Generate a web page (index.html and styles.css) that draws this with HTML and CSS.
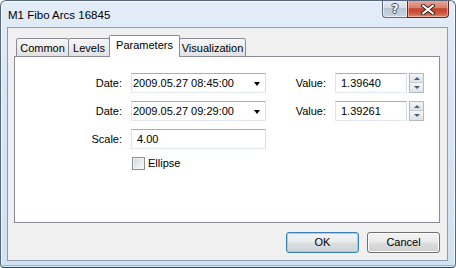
FILE: index.html
```html
<!DOCTYPE html>
<html>
<head>
<meta charset="utf-8">
<link rel="stylesheet" href="styles.css">
</head>
<body>
<div class="window">
  <div class="titlebar">
    <span class="title">M1 Fibo Arcs 16845</span>
    <div class="caption-btns">
      <div class="cap-help"><span class="help-glyph">?</span></div>
      <div class="cap-close">
        <svg width="14" height="11" viewBox="0 0 14 11"><path d="M2 1.5 L12 9.5 M12 1.5 L2 9.5" stroke="#3a2a28" stroke-width="4" stroke-linecap="round"/><path d="M2 1.5 L12 9.5 M12 1.5 L2 9.5" stroke="#ffffff" stroke-width="2" stroke-linecap="round"/></svg>
      </div>
    </div>
  </div>
  <div class="client">
    <div class="tabs">
      <div class="tab tab-common">Common</div>
      <div class="tab tab-levels">Levels</div>
      <div class="tab tab-params active">Parameters</div>
      <div class="tab tab-vis">Visualization</div>
    </div>
    <div class="panel">
      <div class="form">
        <div class="label">Date:</div>
        <div class="combo"><span>2009.05.27 08:45:00</span><span class="arrow"></span></div>
        <div class="label">Value:</div>
        <div class="numfield"><div class="edit">1.39640</div><div class="spin"><div class="spin-up"><span class="tri-up"></span></div><div class="spin-down"><span class="tri-down"></span></div></div></div>

        <div class="label">Date:</div>
        <div class="combo"><span>2009.05.27 09:29:00</span><span class="arrow"></span></div>
        <div class="label">Value:</div>
        <div class="numfield"><div class="edit">1.39261</div><div class="spin"><div class="spin-up"><span class="tri-up"></span></div><div class="spin-down"><span class="tri-down"></span></div></div></div>

        <div class="label">Scale:</div>
        <div class="edit">4.00</div>
        <div></div>
        <div></div>

        <div></div>
        <div class="check-row"><span class="checkbox"></span><span>Ellipse</span></div>
        <div></div>
        <div></div>
      </div>
    </div>
    <div class="footer">
      <div class="button default">OK</div>
      <div class="button">Cancel</div>
    </div>
  </div>
</div>
</body>
</html>
```
FILE: styles.css
```css
html, body {
  margin: 0;
  padding: 0;
  background: #ffffff;
}
body {
  font-family: "Liberation Sans", Arial, sans-serif;
  font-size: 11px;
  color: #000;
}
.window {
  box-sizing: border-box;
  width: 456px;
  height: 268px;
  border: 1px solid #56677d;
  border-bottom-color: #2f4461;
  border-radius: 6px 6px 4px 4px;
  background: linear-gradient(to bottom, #e3edf9 0%, #d7e5f5 40%, #d3e2f3 100%);
  box-shadow: inset 0 0 0 1px rgba(255,255,255,0.75), inset 0 -2px 0 #5fc6ee;
  display: flex;
  flex-direction: column;
  overflow: hidden;
}
.titlebar {
  height: 26px;
  display: flex;
  justify-content: space-between;
  align-items: flex-start;
}
.title {
  font-size: 11.5px;
  padding-left: 7px;
  margin-top: 7px;
  line-height: 14px;
  color: #000;
}
.caption-btns {
  display: flex;
  margin-top: -1px;
  margin-right: 6px;
}
.cap-help {
  box-sizing: border-box;
  width: 25px;
  height: 18px;
  border: 1px solid #5f6d80;
  border-top: none;
  border-right: none;
  border-radius: 0 0 0 4px;
  background: linear-gradient(to bottom, #e7edf3 0%, #d4dde8 45%, #b8c5d4 50%, #c9d4e0 100%);
  box-shadow: inset 0 0 0 1px rgba(255,255,255,0.6);
  display: flex;
  justify-content: center;
  align-items: center;
}
.help-glyph {
  font-family: "DejaVu Sans", sans-serif;
  font-size: 12px;
  font-weight: bold;
  line-height: 12px;
  color: #fff;
  margin-top: 1px;
  text-shadow: 1px 0 0 #3e4a5c, -1px 0 0 #3e4a5c, 0 1px 0 #3e4a5c, 0 -1px 0 #3e4a5c;
}
.cap-close {
  box-sizing: border-box;
  width: 42px;
  height: 18px;
  border: 1px solid #5b2a22;
  border-top: none;
  border-radius: 0 0 4px 0;
  background: linear-gradient(to bottom, #e9aa9c 0%, #d9806d 45%, #c5412a 52%, #cf5b43 80%, #e08c76 100%);
  box-shadow: inset 0 0 0 1px rgba(255,220,210,0.5);
  display: flex;
  justify-content: center;
  align-items: center;
}
.cap-close svg {
  display: block;
  margin-top: 1px;
}
.client {
  flex: 1;
  margin: 0 7px 6px 6px;
  border: 1px solid #8d9bb0;
  background: #f0f0f0;
  padding: 7px 7px 7px 6px;
  display: flex;
  flex-direction: column;
}
.tabs {
  position: relative;
  z-index: 1;
  height: 22px;
  margin-bottom: -1px;
  padding-left: 2px;
  display: flex;
  align-items: flex-end;
}
.tab {
  box-sizing: border-box;
  height: 19px;
  border: 1px solid #898c95;
  border-radius: 2px 2px 0 0;
  margin-left: -1px;
  background: linear-gradient(to bottom, #f6f6f6 0%, #ececec 50%, #e1e1e1 100%);
  text-align: center;
  line-height: 15px;
  padding-top: 2px;
}
.tab:first-child {
  margin-left: 0;
}
.tab.active {
  height: 22px;
  background: #fff;
  border-bottom: none;
  padding-top: 2px;
}
.tab-common { width: 53px; }
.tab-levels { width: 42px; }
.tab-params { width: 71px; }
.tab-vis { width: 67px; }
.panel {
  height: 167px;
  box-sizing: border-box;
  border: 1px solid #898c95;
  background: #fff;
  padding-top: 16px;
}
.form {
  display: grid;
  grid-template-columns: 109px 135px 55px 89px;
  grid-auto-rows: 20px;
  column-gap: 7px;
  row-gap: 8px;
}
.label {
  text-align: right;
  padding-right: 2px;
  line-height: 20px;
}
.combo, .edit {
  box-sizing: border-box;
  height: 20px;
  border: 1px solid;
  border-color: #abadb3 #dbdfe6 #e3e9ef #e2e3ea;
  background: #fff;
  line-height: 18px;
}
.combo {
  display: flex;
  justify-content: space-between;
  align-items: center;
  padding-left: 1px;
  padding-right: 5px;
}
.edit {
  padding-left: 5px;
}
.arrow {
  width: 0;
  height: 0;
  border-top: 4px solid #000;
  border-left: 3.5px solid transparent;
  border-right: 3.5px solid transparent;
  margin-top: 1px;
}
.numfield {
  display: flex;
  gap: 2px;
}
.numfield .edit {
  width: 72px;
}
.spin {
  width: 15px;
  display: flex;
  flex-direction: column;
  gap: 0;
}
.spin-up, .spin-down {
  box-sizing: border-box;
  height: 10px;
  border: 1px solid #b4b9c2;
  background: linear-gradient(to bottom, #f6f6f6, #dfe2e6);
  display: flex;
  justify-content: center;
  align-items: center;
}
.spin-up { border-bottom-color: #c8ccd2; }
.spin-down { border-top: none; }
.tri-up {
  width: 0;
  height: 0;
  border-bottom: 3px solid #4a5f80;
  border-left: 3px solid transparent;
  border-right: 3px solid transparent;
}
.tri-down {
  width: 0;
  height: 0;
  border-top: 3px solid #4a5f80;
  border-left: 3px solid transparent;
  border-right: 3px solid transparent;
}
.check-row {
  display: flex;
  align-items: center;
  gap: 3px;
  padding-left: 1px;
  height: 13px;
  line-height: 13px;
}
.checkbox {
  box-sizing: border-box;
  width: 13px;
  height: 13px;
  border: 1px solid #8e8f8f;
  background: linear-gradient(135deg, #d0d3d8 0%, #eceef0 60%, #fafafa 100%);
  box-shadow: inset 0 0 0 1px #f4f4f4;
}
.footer {
  margin-top: 9px;
  display: flex;
  justify-content: flex-end;
  gap: 8px;
  padding-right: 0;
}
.button {
  box-sizing: border-box;
  width: 73px;
  height: 21px;
  border: 1px solid #707070;
  border-radius: 3px;
  background: linear-gradient(to bottom, #f2f2f2 0%, #ebebeb 48%, #dddddd 52%, #cfcfcf 100%);
  box-shadow: inset 0 0 0 1px #fcfcfc;
  text-align: center;
  line-height: 19px;
}
.button.default {
  border-color: #3c7fb1;
  box-shadow: inset 0 0 0 1px #8fd6f4;
  background: linear-gradient(to bottom, #f0f2f3 0%, #e9ecee 48%, #dbdfe2 52%, #ced4d8 100%);
}
```
